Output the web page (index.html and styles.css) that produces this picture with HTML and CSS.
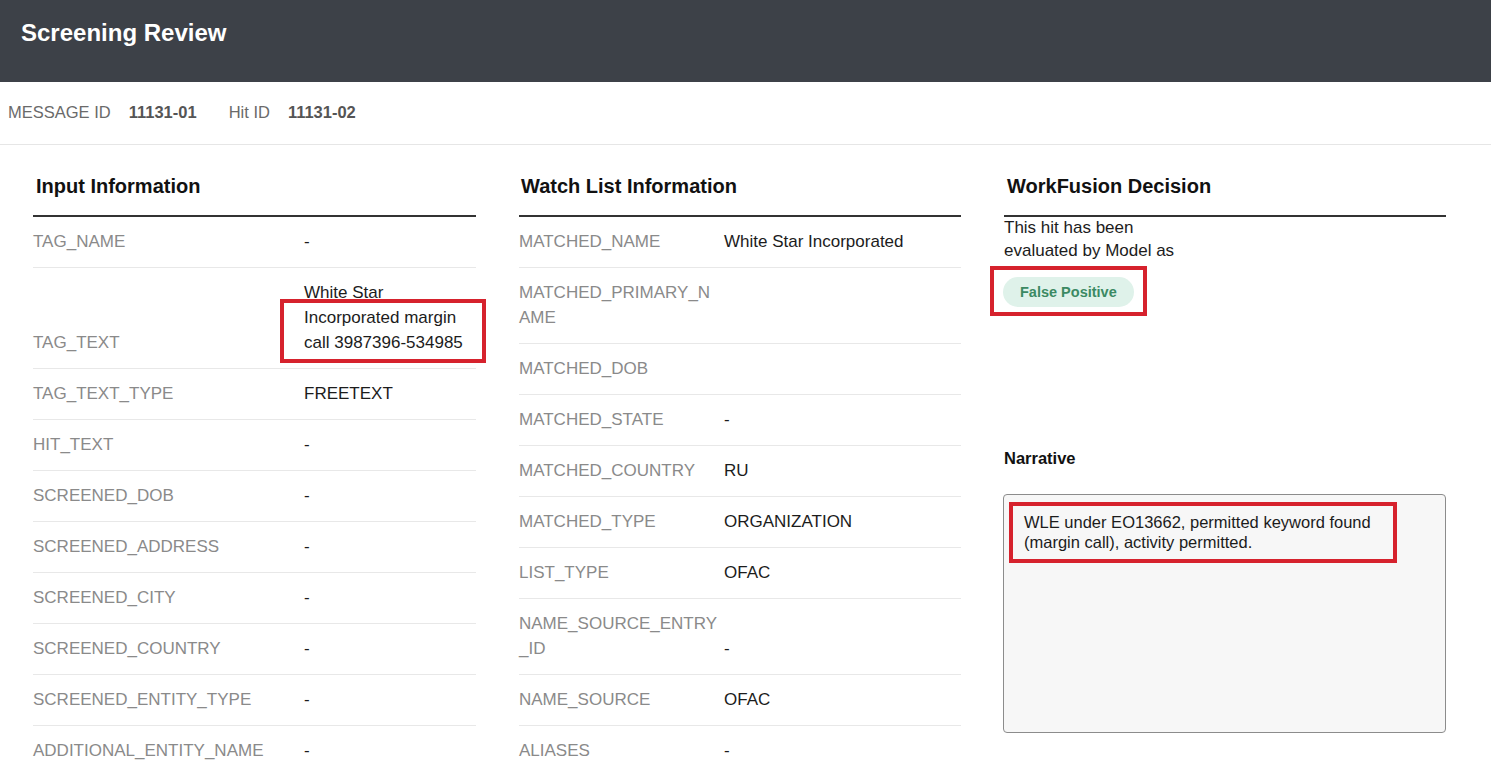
FILE: index.html
```html
<!DOCTYPE html>
<html lang="en">
<head>
<meta charset="utf-8">
<title>Screening Review</title>
<link rel="stylesheet" href="styles.css">
</head>
<body>
<header class="topbar">
  <h1 class="topbar-title">Screening Review</h1>
</header>
<div class="idbar">
  <span class="id-label">MESSAGE ID</span>
  <span class="id-value">11131-01</span>
  <span class="id-label id-label-second">Hit ID</span>
  <span class="id-value">11131-02</span>
</div>
<main class="columns">
  <section class="panel">
    <h2 class="panel-title">Input Information</h2>
    <div class="rows rows-input">
      <div class="row"><div class="label">TAG_NAME</div><div class="value">-</div></div>
      <div class="row"><div class="label">TAG_TEXT</div><div class="value value-annot">White Star Incorporated margin call 3987396-534985<span class="annot annot-tagtext"></span></div></div>
      <div class="row"><div class="label">TAG_TEXT_TYPE</div><div class="value">FREETEXT</div></div>
      <div class="row"><div class="label">HIT_TEXT</div><div class="value">-</div></div>
      <div class="row"><div class="label">SCREENED_DOB</div><div class="value">-</div></div>
      <div class="row"><div class="label">SCREENED_ADDRESS</div><div class="value">-</div></div>
      <div class="row"><div class="label">SCREENED_CITY</div><div class="value">-</div></div>
      <div class="row"><div class="label">SCREENED_COUNTRY</div><div class="value">-</div></div>
      <div class="row"><div class="label">SCREENED_ENTITY_TYPE</div><div class="value">-</div></div>
      <div class="row"><div class="label">ADDITIONAL_ENTITY_NAME</div><div class="value">-</div></div>
    </div>
  </section>
  <section class="panel">
    <h2 class="panel-title panel-title-watch">Watch List Information</h2>
    <div class="rows rows-watch">
      <div class="row"><div class="label">MATCHED_NAME</div><div class="value">White Star Incorporated</div></div>
      <div class="row"><div class="label">MATCHED_PRIMARY_NAME</div><div class="value"></div></div>
      <div class="row"><div class="label">MATCHED_DOB</div><div class="value"></div></div>
      <div class="row"><div class="label">MATCHED_STATE</div><div class="value">-</div></div>
      <div class="row"><div class="label">MATCHED_COUNTRY</div><div class="value">RU</div></div>
      <div class="row"><div class="label">MATCHED_TYPE</div><div class="value">ORGANIZATION</div></div>
      <div class="row"><div class="label">LIST_TYPE</div><div class="value">OFAC</div></div>
      <div class="row"><div class="label">NAME_SOURCE_ENTRY_ID</div><div class="value">-</div></div>
      <div class="row"><div class="label">NAME_SOURCE</div><div class="value">OFAC</div></div>
      <div class="row"><div class="label">ALIASES</div><div class="value">-</div></div>
    </div>
  </section>
  <section class="panel">
    <h2 class="panel-title">WorkFusion Decision</h2>
    <p class="decision-text">This hit has been evaluated by Model as</p>
    <div class="badge-wrap">
      <span class="badge">False Positive</span>
      <span class="annot annot-badge"></span>
    </div>
    <h3 class="narrative-title">Narrative</h3>
    <div class="narrative-box">
      <p class="narrative-text">WLE under EO13662, permitted keyword found (margin call), activity permitted.</p>
      <span class="annot annot-narrative"></span>
    </div>
  </section>
</main>
</body>
</html>
```
FILE: styles.css
```css
* { box-sizing: border-box; }

body {
  margin: 0;
  font-family: "Liberation Sans", Arial, sans-serif;
  color: #1c1c1c;
  background: #ffffff;
}

.topbar {
  height: 82px;
  background: #3d4148;
  padding: 19px 0 0 21px;
}

.topbar-title {
  margin: 0;
  font-size: 24px;
  line-height: 28px;
  font-weight: bold;
  color: #ffffff;
}

.idbar {
  height: 63px;
  display: flex;
  align-items: center;
  padding: 0 0 2px 8px;
  border-bottom: 1px solid #e6e6e6;
  font-size: 16.5px;
}

.id-label { color: #6a6a6a; }
.id-label-second { margin-left: 32px; }
.id-value {
  margin-left: 18px;
  font-weight: bold;
  color: #555555;
}

.columns {
  display: grid;
  grid-template-columns: 443px 442px 442px;
  column-gap: 43px;
  padding-left: 33px;
  align-items: start;
}

.panel { min-width: 0; }

.panel-title {
  margin: 0;
  padding: 29px 0 17px 3px;
  font-size: 20px;
  line-height: 24px;
  font-weight: bold;
  color: #111111;
  border-bottom: 2px solid #333333;
}

.panel-title-watch { padding-left: 2px; }

.rows { font-size: 17px; line-height: 25px; }

.row {
  display: grid;
  column-gap: 5px;
  align-items: end;
  border-bottom: 1px solid #e8e8e8;
}

.rows-input .row { grid-template-columns: 266px 1fr; }
.rows-watch .row { grid-template-columns: 200px 1fr; }

.label {
  padding: 12px 0 13px;
  color: #8a8a8a;
  word-break: break-all;
}

.value {
  padding: 12px 0 13px;
  color: #1c1c1c;
}

.value-annot { position: relative; }

.annot {
  position: absolute;
  border: 4px solid #d6222d;
  pointer-events: none;
}

.annot-tagtext {
  left: -24px;
  top: 31px;
  width: 206px;
  height: 64px;
}

.decision-text {
  margin: -1px 0 0;
  max-width: 185px;
  font-size: 17px;
  line-height: 23px;
  color: #1c1c1c;
}

.badge-wrap {
  position: relative;
  margin-top: 15px;
  height: 30px;
}

.badge {
  display: inline-block;
  height: 30px;
  line-height: 30px;
  padding: 0 17px;
  margin-left: -1px;
  border-radius: 15px;
  background: #dff2ea;
  color: #3b8a63;
  font-size: 14.5px;
  font-weight: bold;
}

.annot-badge {
  left: -14px;
  top: -11px;
  width: 157px;
  height: 50px;
}

.narrative-title {
  margin: 141px 0 0;
  font-size: 16.5px;
  line-height: 20px;
  font-weight: bold;
  color: #111111;
}

.narrative-box {
  position: relative;
  margin-top: 26px;
  height: 239px;
  margin-left: -1px;
  border: 1px solid #8c8c8c;
  border-radius: 4px;
  background: #f7f7f7;
  padding: 17px 0 0 20px;
}

.narrative-text {
  margin: 0;
  max-width: 370px;
  font-size: 16.5px;
  line-height: 20px;
  color: #1c1c1c;
}

.annot-narrative {
  left: 5px;
  top: 7px;
  width: 388px;
  height: 61px;
}
```
